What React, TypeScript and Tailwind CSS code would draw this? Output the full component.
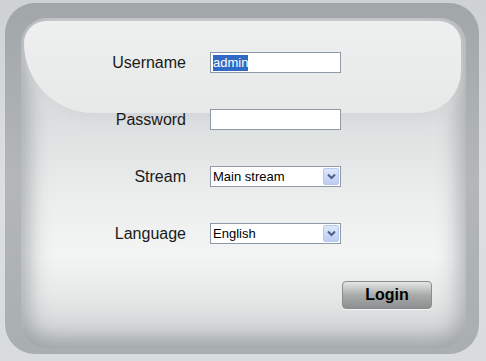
import { FC } from 'react';

const Chevron: FC = () => (
    <div className="flex items-center justify-center w-[16px] h-[17px] mr-[1px] rounded-[2px] border border-[#b8c9ee] bg-gradient-to-b from-[#dfe8fb] to-[#bccdf3]">
        <svg width="9" height="7" viewBox="0 0 9 7">
            <path d="M1 1.5 L4.5 5 L8 1.5" fill="none" stroke="#4d6185" strokeWidth="2" />
        </svg>
    </div>
);

interface RowProps {
    label: string;
    children: React.ReactNode;
}

const Row: FC<RowProps> = ({ label, children }) => (
    <div className="flex items-center h-[21px]">
        <div className="w-[186px] pr-[1px] text-right text-[16px] text-[#1a1a1a]">{label}</div>
        <div className="ml-[23px]">{children}</div>
    </div>
);

const App: FC = () => {
    return (
        <div className="w-[486px] h-[361px] bg-gradient-to-b from-[#cfd2d3] via-[#dcdfdf] to-[#d9dcdc] pt-[3px] pl-[5px] overflow-hidden font-['Liberation_Sans',Arial,sans-serif]">
            <div className="w-[474px] h-[351px] rounded-[30px] bg-gradient-to-b from-[#a1a6a8] via-[#b3b7b8] to-[#a9aeaf] pt-[15px] pl-[16px] pr-[13px] pb-[6px]">
                <div className="relative h-full rounded-[26px] bg-[linear-gradient(to_bottom,#e2e4e4_0%,#dcdfdf_30%,#eceeee_55%,#f3f4f4_72%,#e6e8e8_85%,#c6cacb_100%)] shadow-[inset_12px_0_18px_rgba(150,156,158,0.5),inset_-12px_0_18px_rgba(150,156,158,0.45),inset_0_-12px_16px_rgba(150,156,158,0.4)] overflow-hidden">
                    {/* glossy top highlight */}
                    <div className="absolute left-[3px] top-[3px] w-[437px] h-[92px] rounded-t-[22px] rounded-bl-[70px] rounded-br-[42px] bg-gradient-to-b from-[#eeefef] to-[#e7e8e8] shadow-[0_5px_10px_rgba(205,208,209,0.55)]" />

                    <div className="relative flex flex-col -ml-[20px] pt-[34px] gap-[36px]">
                        <Row label="Username">
                            <div className="flex items-center w-[131px] h-[21px] border border-[#8e9aa6] bg-white px-[2px] text-[13px]">
                                <span className="bg-[#316ac5] text-white leading-[16px]">admin</span>
                            </div>
                        </Row>
                        <Row label="Password">
                            <div className="w-[131px] h-[21px] border border-[#8e9aa6] bg-white" />
                        </Row>
                        <Row label="Stream">
                            <div className="flex items-center justify-between w-[131px] h-[21px] border border-[#8e9aa6] bg-white pl-[2px] text-[13px] text-black">
                                <span>Main stream</span>
                                <Chevron />
                            </div>
                        </Row>
                        <Row label="Language">
                            <div className="flex items-center justify-between w-[131px] h-[21px] border border-[#8e9aa6] bg-white pl-[2px] text-[13px] text-black">
                                <span>English</span>
                                <Chevron />
                            </div>
                        </Row>
                    </div>

                    <div className="relative flex justify-end pr-[34px] mt-[37px]">
                        <button className="w-[90px] h-[28px] rounded-[4px] border border-[#8a8d8e] bg-gradient-to-b from-[#e6e6e6] via-[#a9abab] to-[#8d9090] shadow-[0_1px_0_#f4f4f4] text-[16px] font-bold text-black">
                            Login
                        </button>
                    </div>
                </div>
            </div>
        </div>
    );
};

export default App;
